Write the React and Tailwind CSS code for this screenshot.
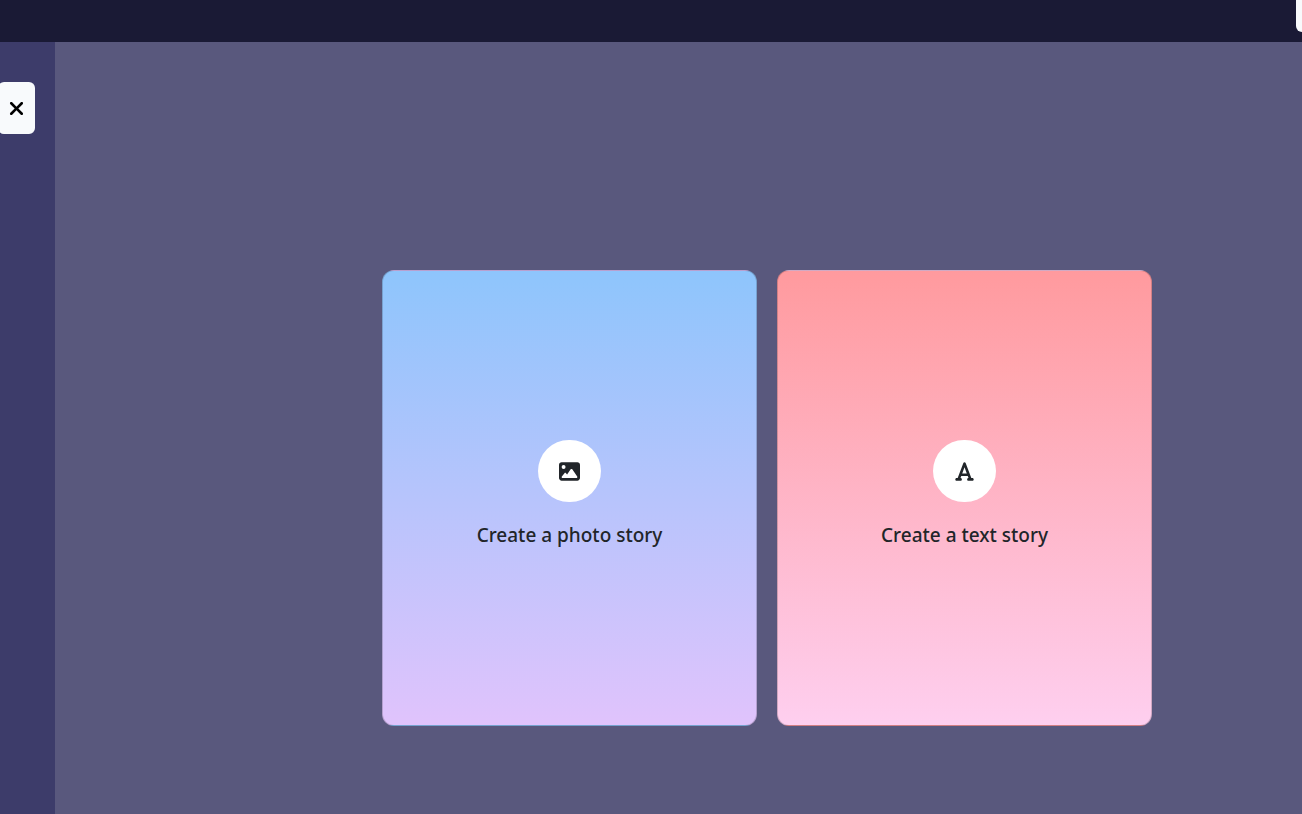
import React from "react";
import { FaFont, FaImage, FaXmark } from "react-icons/fa6";

function StoryCard({ icon: Icon, label, gradient }) {
  return (
    <button
      type="button"
      className={`flex h-[456px] w-[375px] flex-col items-center justify-center gap-[18px] rounded-xl border border-black/[0.175] pb-1.5 ${gradient}`}
    >
      <span className="flex h-[62px] w-[63px] items-center justify-center rounded-full bg-white">
        <Icon className="size-[21px]" aria-hidden="true" />
      </span>
      <span className="text-[19px] leading-[30px] font-medium">{label}</span>
    </button>
  );
}

export default function App() {
  return (
    <div className="flex min-h-screen flex-col overflow-hidden bg-[#59587d] font-['Segoe_UI','Noto_Sans',sans-serif] text-[#212529]">
      <header className="relative h-[42px] bg-[#1a1a35]">
        <button
          type="button"
          aria-label="Menu"
          className="absolute -top-5 -right-[31px] h-[52px] w-[37px] rounded-md bg-[#f8fafc]"
        />
      </header>
      <div className="flex grow">
        <aside className="w-[55px] shrink-0 bg-[#3d3c6a] pt-10">
          <button
            type="button"
            aria-label="Close"
            className="-ml-0.5 flex h-[52px] w-[37px] items-center justify-center rounded-md bg-[#f8fafc] text-black"
          >
            <FaXmark className="size-[21px]" aria-hidden="true" />
          </button>
        </aside>
        <main className="flex grow items-start justify-end gap-5 pt-[228px] pr-[150px]">
          <StoryCard
            icon={FaImage}
            label="Create a photo story"
            gradient="bg-[linear-gradient(to_top,#e0c3fc,#8ec5fc)]"
          />
          <StoryCard
            icon={FaFont}
            label="Create a text story"
            gradient="bg-[linear-gradient(to_top,#fecfef,#ff9a9e)]"
          />
        </main>
      </div>
    </div>
  );
}
